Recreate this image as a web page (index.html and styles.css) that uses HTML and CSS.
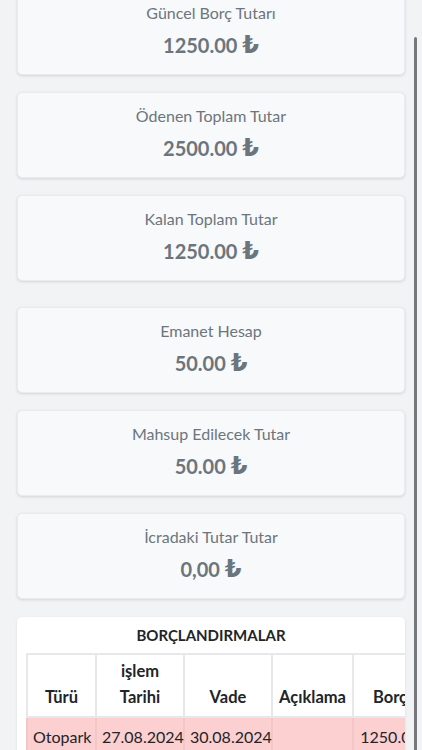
FILE: index.html
```html
<!DOCTYPE html>
<html lang="tr">
<head>
<meta charset="utf-8">
<title>Borç Özeti</title>
<link rel="stylesheet" href="styles.css">
</head>
<body>
<main class="page">
  <section class="group">
    <div class="stat">
      <div class="stat-label">Güncel Borç Tutarı</div>
      <div class="stat-value">1250.00 <span class="cur">₺</span></div>
    </div>
    <div class="stat">
      <div class="stat-label">Ödenen Toplam Tutar</div>
      <div class="stat-value">2500.00 <span class="cur">₺</span></div>
    </div>
    <div class="stat">
      <div class="stat-label">Kalan Toplam Tutar</div>
      <div class="stat-value">1250.00 <span class="cur">₺</span></div>
    </div>
  </section>
  <section class="group">
    <div class="stat">
      <div class="stat-label">Emanet Hesap</div>
      <div class="stat-value">50.00 <span class="cur">₺</span></div>
    </div>
    <div class="stat">
      <div class="stat-label">Mahsup Edilecek Tutar</div>
      <div class="stat-value">50.00 <span class="cur">₺</span></div>
    </div>
    <div class="stat">
      <div class="stat-label">İcradaki Tutar Tutar</div>
      <div class="stat-value">0,00 <span class="cur">₺</span></div>
    </div>
  </section>
  <section class="table-card">
    <h2 class="table-title">BORÇLANDIRMALAR</h2>
    <div class="table-wrap">
      <table class="debts">
        <colgroup>
          <col class="c1"><col class="c2"><col class="c3"><col class="c4"><col class="c5">
        </colgroup>
        <thead>
          <tr>
            <th>Türü</th>
            <th>işlem Tarihi</th>
            <th>Vade</th>
            <th>Açıklama</th>
            <th>Borç</th>
          </tr>
        </thead>
        <tbody>
          <tr class="danger">
            <td>Otopark</td>
            <td>27.08.2024</td>
            <td>30.08.2024</td>
            <td></td>
            <td>1250.00</td>
          </tr>
        </tbody>
      </table>
    </div>
  </section>
</main>
<div class="scroll-indicator"></div>
</body>
</html>
```
FILE: styles.css
```css
html, body {
  margin: 0;
  padding: 0;
  height: 100%;
  overflow: hidden;
}
body {
  background: #f2f3f5;
  font-family: Lato, "Noto Sans", "DejaVu Sans", sans-serif;
  color: #212529;
}
.page {
  padding: 0 17px;
  display: flex;
  flex-direction: column;
  gap: 26px;
  margin-top: -11px;
}
.group {
  display: flex;
  flex-direction: column;
  gap: 17px;
}
.stat {
  height: 86px;
  box-sizing: border-box;
  background: #f8f9fa;
  border: 1px solid #e9ebee;
  border-radius: 5px;
  box-shadow: 0 1px 3px rgba(0, 0, 0, 0.13);
  display: flex;
  flex-direction: column;
  align-items: center;
  padding-top: 12px;
}
.stat-label {
  font-size: 16px;
  line-height: 22px;
  color: #6c757d;
}
.stat-value {
  margin-top: 9px;
  font-size: 20px;
  line-height: 24px;
  font-weight: 700;
  color: #6c757d;
}
.cur {
  font-family: "DejaVu Sans", sans-serif;
  font-weight: 700;
  font-size: 24px;
  line-height: 1;
}
.table-card {
  margin-top: -8px;
  background: #ffffff;
  border-radius: 5px;
  box-shadow: 0 1px 3px rgba(0, 0, 0, 0.1);
  padding: 0 0 0 9px;
  overflow: hidden;
}
.table-title {
  margin: 0;
  padding: 8px 9px 0 0;
  height: 28px;
  box-sizing: border-box;
  text-align: center;
  font-size: 15px;
  line-height: 20px;
  font-weight: 700;
  color: #212529;
}
.table-wrap {
  margin-top: 8px;
  overflow: hidden;
}
.debts {
  border-collapse: collapse;
  table-layout: fixed;
  width: 400px;
  font-size: 16px;
}
.c1 { width: 69px; }
.c2 { width: 88px; }
.c3 { width: 88px; }
.c4 { width: 81px; }
.c5 { width: 74px; }
.debts th,
.debts td {
  border: 2px solid #e6e8eb;
  padding: 0 5px;
  text-align: center;
}
.debts th {
  vertical-align: bottom;
  font-weight: 700;
  font-size: 16.5px;
  line-height: 26px;
  padding-top: 3px;
  padding-bottom: 6px;
  height: 51px;
  color: #212529;
}
.debts td {
  height: 36px;
  white-space: nowrap;
  color: #212529;
}
.danger td {
  background: #fccfd0;
  border-color: #f3c6c8;
}
.scroll-indicator {
  position: fixed;
  top: 37px;
  right: 5px;
  width: 3px;
  height: 740px;
  border-radius: 2px;
  background: #77787b;
}
```
